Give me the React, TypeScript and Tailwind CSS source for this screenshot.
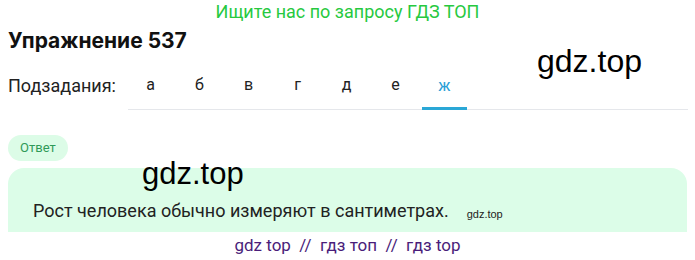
import React from "react";

const tabs = ["а", "б", "в", "г", "д", "е", "ж"];

export default function App() {
  return (
    <div className="relative w-[695px] h-[260px] bg-white overflow-hidden" style={{ fontFamily: "Roboto, 'Liberation Sans', sans-serif" }}>
      <div className="h-[24px] flex justify-center items-start pt-[1px] text-[18px] leading-[22px] text-[#27c93f]">
        Ищите нас по запросу ГДЗ ТОП
      </div>
      <div className="pl-[8px] pt-[3px] h-[38px] text-[21px] leading-[28px] font-bold text-[#111]" style={{ fontFamily: "Inter, Roboto, sans-serif" }}>
        Упражнение 537
      </div>
      <div className="flex items-stretch pl-[8px] pr-[7px] h-[48px]">
        <div className="flex items-center text-[18px] text-[#222] w-[120px] pb-[2px]">Подзадания:</div>
        <div className="flex-1 flex gap-[4px] border-b border-[#e5e7eb] pl-[0px]">
          {tabs.map((t) => (
            <div
              key={t}
              className={
                "w-[45px] flex items-center justify-center text-[16px] pb-[1px] " +
                (t === "ж" ? "text-[#2a9fd6] border-b-[3px] border-[#2aa7d6] mb-[-1px] pt-[3px]" : "text-[#222]")
              }
            >
              {t}
            </div>
          ))}
        </div>
      </div>
      <div className="pl-[8px] pt-[25px]">
        <div className="inline-flex items-center h-[26px] px-[12px] rounded-full bg-[#dcfce7] text-[13px] text-[#2f9a58]">
          Ответ
        </div>
      </div>
      <div className="mx-[8px] mt-[7px] h-[64px] rounded-t-[16px] bg-[#dcfde8] flex items-end pl-[25px] pb-[8px]">
        <span className="text-[18px] text-[#222]">Рост человека обычно измеряют в сантиметрах.</span>
        <span className="ml-[18px] mb-[2px] text-[11px] text-[#222]" style={{ fontFamily: "'Liberation Sans', Arial, sans-serif" }}>gdz.top</span>
      </div>
      <div className="flex justify-center pt-[1px] text-[17px] leading-[24px] text-[#4a1d7a]">
        gdz top&nbsp;&nbsp;//&nbsp;&nbsp;гдз топ&nbsp;&nbsp;//&nbsp;&nbsp;гдз top
      </div>
      <div className="absolute left-[537px] top-[43px] text-[32px] leading-[36px] text-black" style={{ fontFamily: "'Liberation Sans', Arial, sans-serif" }}>gdz.top</div>
      <div className="absolute left-[142px] top-[156px] text-[31px] leading-[36px] text-black" style={{ fontFamily: "'Liberation Sans', Arial, sans-serif" }}>gdz.top</div>
    </div>
  );
}
